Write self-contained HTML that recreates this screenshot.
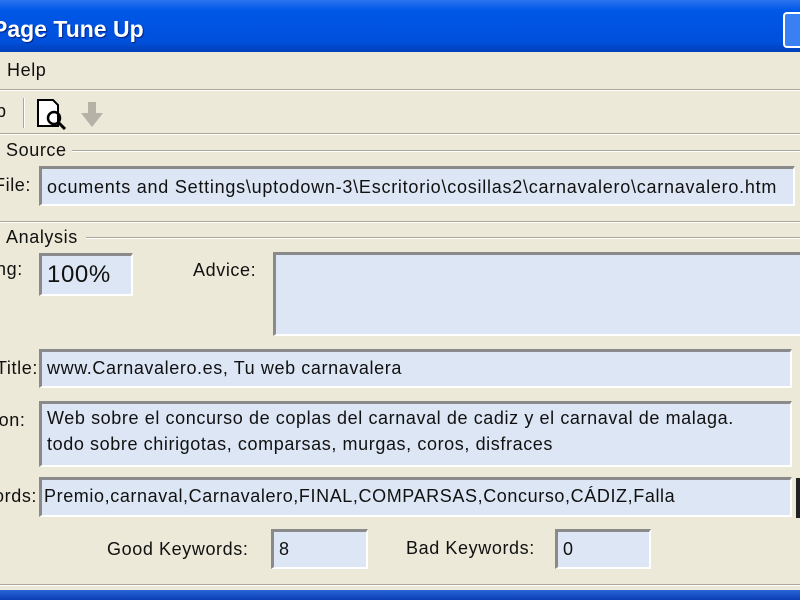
<!DOCTYPE html><html><head><style>
body{margin:0;width:800px;height:600px;overflow:hidden;background:#ECE9D8;font-family:"Liberation Sans",sans-serif;font-size:18px;letter-spacing:0.6px;color:#111;position:relative}
.a{position:absolute;white-space:nowrap}
.in{position:absolute;background:#DCE6F4;border-top:3px solid #8a8a8a;border-left:3px solid #8a8a8a;border-right:2px solid #fff;border-bottom:2px solid #fff;box-sizing:border-box;padding:4px 0 0 5px;white-space:nowrap;overflow:hidden}
.hl{position:absolute;left:0;width:800px;height:0;border-top:1px solid #aca899;border-bottom:1px solid #fff}
</style></head><body>
<div class="a" style="left:0;top:0;width:800px;height:52px;background:linear-gradient(#2a74f0,#0058e6 20%,#0050dc 80%,#0040b8)"></div>
<div class="a" style="left:-8px;top:16px;font-size:23px;font-weight:bold;color:#fff;letter-spacing:0;text-shadow:1px 1px 1px #002080">Page Tune Up</div>
<div class="a" style="left:783px;top:12px;width:30px;height:36px;border:2px solid #fff;border-radius:4px;background:#3a80f5;box-sizing:border-box"></div>
<div class="a" style="left:7px;top:60px">Help</div>
<div class="hl" style="top:89px"></div>
<div class="a" style="left:-4px;top:101px">p</div>
<div class="a" style="left:23px;top:98px;width:1px;height:30px;background:#aca899;border-right:1px solid #fff"></div>
<svg class="a" style="left:36px;top:98px" width="32" height="32"><path d="M2 2H17L22 7V28H2Z" fill="#fff" stroke="#000" stroke-width="2"/><circle cx="18" cy="20" r="6" fill="none" stroke="#000" stroke-width="2.5"/><path d="M22 24L29 31" stroke="#000" stroke-width="3"/></svg>
<svg class="a" style="left:80px;top:100px" width="28" height="30"><path d="M8 2H16V13H23L12 27L1 13H8Z" fill="#b5b2a8"/></svg>
<div class="hl" style="top:133px"></div>
<div class="hl" style="top:150px;left:72px"></div>
<div class="a" style="left:6px;top:140px">Source</div>
<div class="a" style="left:-6px;top:175px">File:</div>
<div class="in" style="left:39px;top:166px;width:756px;height:40px;padding-top:8px;letter-spacing:0.75px">ocuments and Settings\uptodown-3\Escritorio\cosillas2\carnavalero\carnavalero.htm</div>
<div class="hl" style="top:221px"></div>
<div class="hl" style="top:237px;left:86px"></div>
<div class="a" style="left:6px;top:227px">Analysis</div>
<div class="a" style="left:-4px;top:259px">ng:</div>
<div class="in" style="left:39px;top:253px;width:94px;height:43px;font-size:24px;padding-top:5px">100%</div>
<div class="a" style="left:193px;top:260px">Advice:</div>
<div class="in" style="left:273px;top:252px;width:540px;height:84px"></div>
<div class="a" style="left:-4px;top:358px">Title:</div>
<div class="in" style="left:39px;top:349px;width:753px;height:39px;padding-top:6px">www.Carnavalero.es, Tu web carnavalera</div>
<div class="a" style="left:-6px;top:410px">ion:</div>
<div class="in" style="left:39px;top:401px;width:753px;height:66px;line-height:26px;padding-top:1px">Web sobre el concurso de coplas del carnaval de cadiz y el carnaval de malaga.<br>todo sobre chirigotas, comparsas, murgas, coros, disfraces</div>
<div class="a" style="left:-6px;top:486px">ords:</div>
<div class="in" style="left:39px;top:477px;width:753px;height:40px;padding:6px 0 0 2px">Premio,carnaval,Carnavalero,FINAL,COMPARSAS,Concurso,CÁDIZ,Falla</div>
<div class="a" style="left:796px;top:478px;width:8px;height:40px;background:#222"></div>
<div class="a" style="left:107px;top:539px">Good Keywords:</div>
<div class="in" style="left:271px;top:529px;width:97px;height:40px;padding-top:7px">8</div>
<div class="a" style="left:406px;top:538px">Bad Keywords:</div>
<div class="in" style="left:555px;top:529px;width:96px;height:40px;padding-top:7px">0</div>
<div class="hl" style="top:584px"></div>
<div class="a" style="left:0;top:590px;width:800px;height:10px;background:linear-gradient(#2a64d8,#0a3fb5)"></div>
</body></html>
